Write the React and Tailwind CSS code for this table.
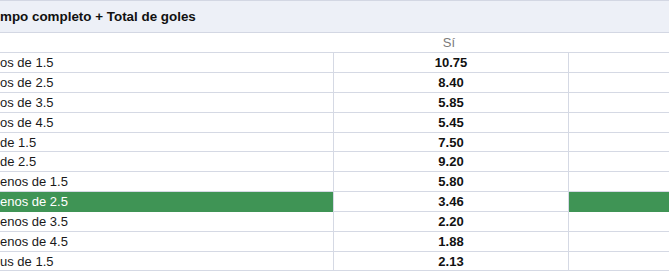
import React from 'react';

const rows = [
    { label: 'os de 1.5', odd: '10.75' },
    { label: 'os de 2.5', odd: '8.40' },
    { label: 'os de 3.5', odd: '5.85' },
    { label: 'os de 4.5', odd: '5.45' },
    { label: 'de 1.5', odd: '7.50' },
    { label: 'de 2.5', odd: '9.20' },
    { label: 'enos de 1.5', odd: '5.80' },
    { label: 'enos de 2.5', odd: '3.46', active: true },
    { label: 'enos de 3.5', odd: '2.20' },
    { label: 'enos de 4.5', odd: '1.88' },
    { label: 'us de 1.5', odd: '2.13' },
];

const App = () => {
    return (
        <div className="w-[669px] h-[272px] overflow-hidden bg-white text-[13px] text-[#1a1a1a] font-['Liberation_Sans',Arial,sans-serif]">
            {/* Market title */}
            <div className="h-[33.3px] box-border border-y border-[#d3d7e3] bg-[#edf0f7] flex items-center">
                <span className="font-bold text-[13.4px] text-[#111]">mpo completo + Total de goles</span>
            </div>

            {/* Column head */}
            <div className="h-[19.85px] box-border border-b border-[#d5d9e4] grid grid-cols-[334px_235px_1fr] items-center">
                <div />
                <div className="text-center text-[#7a7a7a] pr-[5px]">Sí</div>
                <div />
            </div>

            {rows.map((row) => (
                <div
                    key={row.label + row.odd}
                    className="h-[19.85px] box-border border-b border-[#d5d9e4] grid grid-cols-[334px_235px_1fr]"
                >
                    <div
                        className={`flex items-center border-r border-[#d5d9e4] ${
                            row.active ? 'bg-[#3f9455] text-white' : ''
                        }`}
                    >
                        {row.label}
                    </div>
                    <div className="flex items-center justify-center border-r border-[#d5d9e4] font-bold text-[#111]">
                        {row.odd}
                    </div>
                    <div className={row.active ? 'bg-[#3f9455]' : ''} />
                </div>
            ))}
        </div>
    );
};

export default App;
